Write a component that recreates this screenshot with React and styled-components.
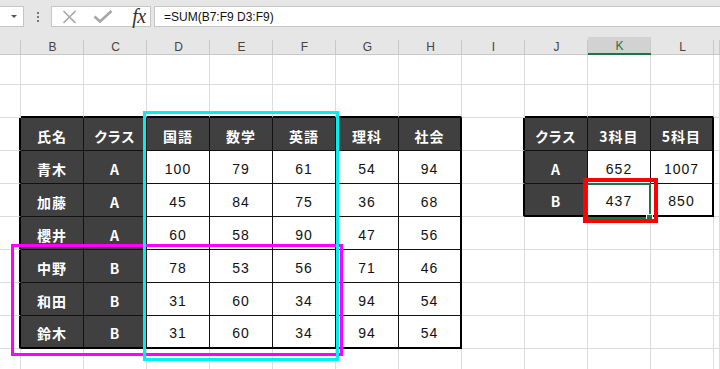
import React from "react";
import styled, { createGlobalStyle } from "styled-components";

const GlobalStyle = createGlobalStyle`
  html, body {
    margin: 0;
    padding: 0;
    background: #fff;
    overflow: hidden;
  }
  body {
    font-family: "Liberation Sans", Arial, sans-serif;
  }
`;

const COLUMNS = ["", "B", "C", "D", "E", "F", "G", "H", "I", "J", "K", "L", ""];
const TEMPLATE = "21px repeat(11, 63px) 1fr";
const ACTIVE_COL = 10;

const tables = [
  {
    r0: 3,
    c0: 1,
    darkCols: [1, 2],
    rows: [
      ["氏名", "クラス", "国語", "数学", "英語", "理科", "社会"],
      ["青木", "A", "100", "79", "61", "54", "94"],
      ["加藤", "A", "45", "84", "75", "36", "68"],
      ["櫻井", "A", "60", "58", "90", "47", "56"],
      ["中野", "B", "78", "53", "56", "71", "46"],
      ["和田", "B", "31", "60", "34", "94", "54"],
      ["鈴木", "B", "31", "60", "34", "94", "54"],
    ],
  },
  {
    r0: 3,
    c0: 9,
    darkCols: [9],
    rows: [
      ["クラス", "3科目", "5科目"],
      ["A", "652", "1007"],
      ["B", "437", "850"],
    ],
  },
];

const findTable = (r, c) =>
  tables.find(
    (t) =>
      r >= t.r0 &&
      r < t.r0 + t.rows.length &&
      c >= t.c0 &&
      c < t.c0 + t.rows[0].length
  );

const edge = (a, b) => {
  if (a && a === b) return "1px solid #111";
  if (a || b) return "2px solid #000";
  return "1px solid #dcdcdc";
};

const Window = styled.div`
  width: 720px;
  height: 369px;
  position: relative;
  overflow: hidden;
  background: #fff;
`;

const FormulaBar = styled.div`
  height: 37px;
  box-sizing: border-box;
  padding-top: 6px;
  background: #e6e6e6;
  display: flex;
  align-items: flex-start;
`;

const NameBox = styled.div`
  width: 25px;
  height: 21px;
  margin-left: -1px;
  box-sizing: border-box;
  background: #fff;
  border: 1px solid #c6c6c6;
  display: flex;
  align-items: center;
  justify-content: flex-end;
  padding-right: 6px;
`;

const Caret = styled.span`
  width: 0;
  height: 0;
  border-left: 3px solid transparent;
  border-right: 3px solid transparent;
  border-top: 3px solid #555;
`;

const Grip = styled.div`
  width: 27px;
  height: 21px;
  display: flex;
  flex-direction: column;
  align-items: center;
  justify-content: center;
  gap: 2px;
  span {
    width: 2px;
    height: 2px;
    background: #777;
  }
`;

const ButtonGroup = styled.div`
  width: 100px;
  height: 21px;
  box-sizing: border-box;
  background: #fff;
  border: 1px solid #c6c6c6;
  display: flex;
  align-items: center;
  padding-left: 9px;
`;

const ToolIcon = styled.span`
  width: ${(p) => p.$w}px;
  display: flex;
  justify-content: center;
  align-items: center;
`;

const Fx = styled.span`
  font-family: "Liberation Serif", "Times New Roman", serif;
  font-style: italic;
  font-size: 20px;
  color: #333;
  line-height: 1;
  margin-top: -2px;
  letter-spacing: -0.5px;
`;

const FormulaInput = styled.div`
  flex: 1;
  height: 21px;
  margin-left: 3px;
  box-sizing: border-box;
  background: #fff;
  border: 1px solid #c6c6c6;
  border-right: none;
  padding-left: 9px;
  display: flex;
  align-items: center;
  font-family: "Liberation Sans", Arial, sans-serif;
  font-size: 12px;
  color: #111;
`;

const HeaderRow = styled.div`
  display: grid;
  grid-template-columns: ${TEMPLATE};
  height: 15px;
`;

const ColHead = styled.div`
  position: relative;
  box-sizing: border-box;
  background: ${(p) => (p.$active ? "#d2d2d2" : "#e6e6e6")};
  color: ${(p) => (p.$active ? "#217346" : "#444")};
  border-bottom: ${(p) => (p.$active ? "2px solid #217346" : "1px solid #c8c8c8")};
  font-family: "Liberation Sans", Arial, sans-serif;
  font-size: 12px;
  display: flex;
  align-items: center;
  justify-content: center;
  padding-top: 2px;
  &::after {
    content: "";
    position: absolute;
    right: 0;
    top: 3px;
    bottom: 0;
    width: 1px;
    background: #c8c8c8;
  }
`;

const Sheet = styled.div`
  display: grid;
  grid-template-columns: ${TEMPLATE};
  grid-auto-rows: 33px;
`;

const Cell = styled.div`
  box-sizing: border-box;
  border-right: ${(p) => p.$right};
  border-bottom: ${(p) => p.$bottom};
  background: ${(p) => (p.$dark ? "#404040" : "#fff")};
  color: ${(p) => (p.$dark ? "#fff" : "#111")};
  font-family: ${(p) =>
    p.$dark
      ? '"Noto Sans CJK JP", "Liberation Sans", sans-serif'
      : '"Liberation Sans", Arial, sans-serif'};
  font-weight: ${(p) => (p.$dark ? 600 : 400)};
  font-size: 14px;
  letter-spacing: 1px;
  font-feature-settings: "palt";
  display: flex;
  align-items: center;
  justify-content: center;
  padding-top: 3px;
`;

const Frame = styled.div`
  position: absolute;
  left: ${(p) => p.$x}px;
  top: ${(p) => p.$y}px;
  width: ${(p) => p.$w}px;
  height: ${(p) => p.$h}px;
  box-sizing: border-box;
  border: ${(p) => p.$b}px solid ${(p) => p.$color};
  pointer-events: none;
`;

const FillHandle = styled.span`
  position: absolute;
  right: -4px;
  bottom: -4px;
  width: 5px;
  height: 5px;
  background: #217346;
  border: 1px solid #fff;
`;

function buildCells() {
  const cells = [];
  for (let r = 1; r <= 10; r++) {
    for (let c = 0; c < COLUMNS.length; c++) {
      const t = findTable(r, c);
      const text = t ? t.rows[r - t.r0][c - t.c0] : "";
      const dark = !!t && (r === t.r0 || t.darkCols.includes(c));
      cells.push(
        <Cell
          key={`${r}-${c}`}
          $dark={dark}
          $right={edge(t, findTable(r, c + 1))}
          $bottom={edge(t, findTable(r + 1, c))}
        >
          {text}
        </Cell>
      );
    }
  }
  return cells;
}

export default function App() {
  return (
    <Window>
      <GlobalStyle />
      <FormulaBar>
        <NameBox>
          <Caret />
        </NameBox>
        <Grip>
          <span />
          <span />
          <span />
        </Grip>
        <ButtonGroup>
          <ToolIcon $w={16}>
            <svg width="15" height="14" viewBox="0 0 15 14">
              <path d="M1.5 1 L13.5 13 M13.5 1 L1.5 13" stroke="#a6a6a6" strokeWidth="1.6" fill="none" />
            </svg>
          </ToolIcon>
          <ToolIcon $w={52}>
            <svg width="20" height="13" viewBox="0 0 20 13">
              <path d="M1.5 6.5 L7 11.5 L18.5 1" stroke="#a6a6a6" strokeWidth="2.6" fill="none" />
            </svg>
          </ToolIcon>
          <ToolIcon $w={20}>
            <Fx>fx</Fx>
          </ToolIcon>
        </ButtonGroup>
        <FormulaInput>=SUM(B7:F9 D3:F9)</FormulaInput>
      </FormulaBar>
      <HeaderRow>
        {COLUMNS.map((name, i) => (
          <ColHead key={i} $active={i === ACTIVE_COL}>
            {name}
          </ColHead>
        ))}
      </HeaderRow>
      <Sheet>{buildCells()}</Sheet>

      <Frame $x={11} $y={244} $w={332} $h={112} $b={3} $color="#ff00ff" />
      <Frame $x={143} $y={111} $w={196} $h={250} $b={3} $color="#00f0f0" />
      <Frame $x={586} $y={183} $w={65} $h={36} $b={2} $color="#217346">
        <FillHandle />
      </Frame>
      <Frame $x={583} $y={178} $w={75} $h={45} $b={4} $color="#ff0000" />
    </Window>
  );
}
